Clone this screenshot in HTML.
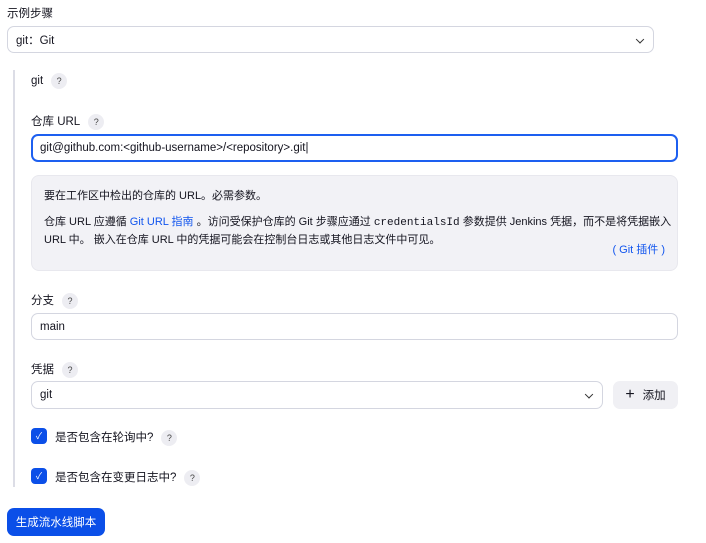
<!DOCTYPE html>
<html><head><meta charset="utf-8"><style>
*{box-sizing:border-box;margin:0;padding:0}
body{width:706px;height:543px;background:#fff;font-family:"Liberation Sans","Noto Sans CJK SC",sans-serif;font-size:11.5px;color:#14141f;position:relative;overflow:hidden}
.a{position:absolute}
.lbl{font-weight:normal}
.q{display:inline-block;width:16px;height:16px;border-radius:50%;background:#ededf2;color:#444;font-size:9px;text-align:center;line-height:16px;vertical-align:middle;margin-left:8px}
.in{border:1px solid #d4d6e0;border-radius:7px;background:#fff;padding-left:8px;display:flex;align-items:center}
.chev{position:absolute;right:10px;top:50%;width:6px;height:6px;border-right:1.2px solid #333;border-bottom:1.2px solid #333;transform:translateY(-60%) rotate(45deg)}
.cb{width:16px;height:16px;border-radius:4px;background:#0b4fe8;color:#fff;font-size:9px;text-align:center;line-height:16px}
</style></head><body>
<div class="a lbl" style="left:7px;top:5px">示例步骤</div>
<div class="a in" style="left:7px;top:26px;width:647px;height:27px">git：Git<span class="chev"></span></div>
<div class="a" style="left:13px;top:70px;width:2px;height:417px;background:#dcdde6"></div>
<div class="a lbl" style="left:31px;top:73px">git<span class="q">?</span></div>
<div class="a lbl" style="left:31px;top:113px">仓库 URL<span class="q">?</span></div>
<div class="a in" style="left:31px;top:134px;width:647px;height:28px;border:2px solid #1d5ff0;padding-left:7px">git@github.com:&lt;github-username&gt;/&lt;repository&gt;.git|</div>
<div class="a" style="left:31px;top:175px;width:647px;height:96px;background:#f2f2f6;border-radius:8px;border:1px solid #e8e8ee;padding:12px 0 0 12px;font-size:11px;line-height:17px">
<div>要在工作区中检出的仓库的 URL。必需参数。</div>
<div style="margin-top:9px;width:630px">仓库 URL 应遵循 <span style="color:#1155ee">Git URL 指南</span> 。访问受保护仓库的 Git 步骤应通过 <span style="font-family:'Liberation Mono',monospace">credentialsId</span> 参数提供 Jenkins 凭据，而不是将凭据嵌入 URL 中。 嵌入在仓库 URL 中的凭据可能会在控制台日志或其他日志文件中可见。</div>
<div style="position:absolute;right:12px;top:66px;color:#1155ee">( Git 插件 )</div>
</div>
<div class="a lbl" style="left:31px;top:292px">分支<span class="q">?</span></div>
<div class="a in" style="left:31px;top:313px;width:647px;height:27px">main</div>
<div class="a lbl" style="left:31px;top:361px">凭据<span class="q">?</span></div>
<div class="a in" style="left:31px;top:381px;width:572px;height:28px">git<span class="chev"></span></div>
<div class="a" style="left:613px;top:381px;width:65px;height:28px;background:#f0f0f4;border-radius:7px;display:flex;align-items:center;justify-content:center;gap:8px"><span style="font-size:16px;font-weight:300">+</span>添加</div>
<div class="a cb" style="left:31px;top:428px">✓</div>
<div class="a lbl" style="left:55px;top:429px">是否包含在轮询中?<span class="q">?</span></div>
<div class="a cb" style="left:31px;top:468px">✓</div>
<div class="a lbl" style="left:55px;top:469px">是否包含在变更日志中?<span class="q">?</span></div>
<div class="a" style="left:7px;top:508px;width:98px;height:28px;background:#0b4fe8;border-radius:7px;color:#fff;display:flex;align-items:center;justify-content:center">生成流水线脚本</div>
</body></html>
